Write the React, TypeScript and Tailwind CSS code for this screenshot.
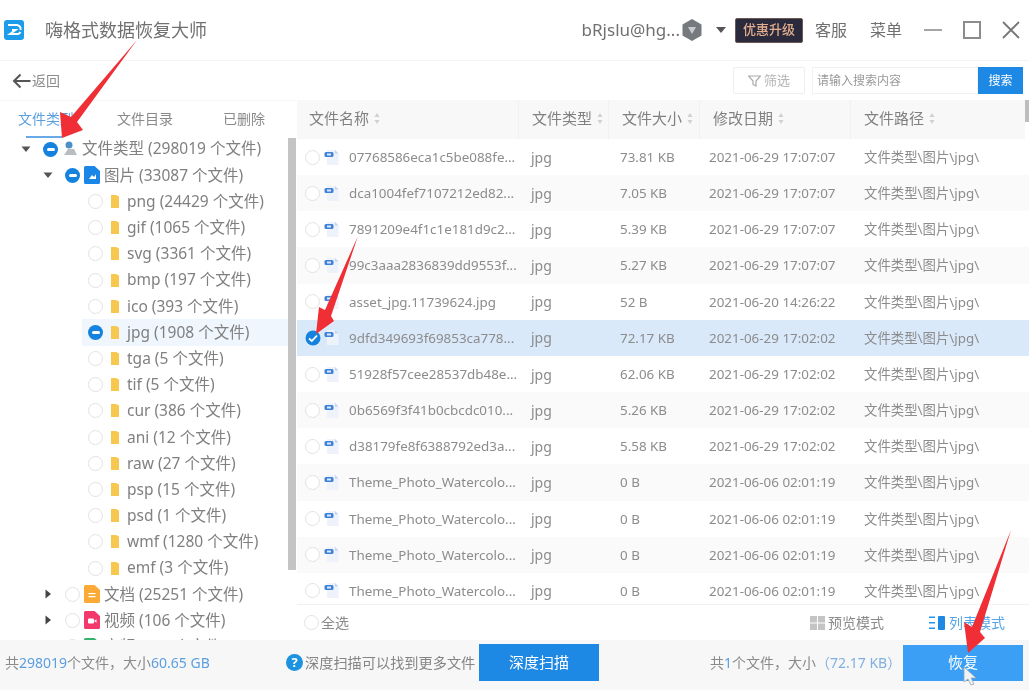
import type { ReactNode } from "react"

const FONT = "font-['Noto_Sans','Noto_Sans_CJK_SC',sans-serif]"

const treeRows = [
  { label: "png (24429 个文件)" },
  { label: "gif (1065 个文件)" },
  { label: "svg (3361 个文件)" },
  { label: "bmp (197 个文件)" },
  { label: "ico (393 个文件)" },
  { label: "jpg (1908 个文件)", active: true },
  { label: "tga (5 个文件)" },
  { label: "tif (5 个文件)" },
  { label: "cur (386 个文件)" },
  { label: "ani (12 个文件)" },
  { label: "raw (27 个文件)" },
  { label: "psp (15 个文件)" },
  { label: "psd (1 个文件)" },
  { label: "wmf (1280 个文件)" },
  { label: "emf (3 个文件)" },
]

const fileRows = [
  { name: "07768586eca1c5be088fe...", size: "73.81 KB", date: "2021-06-29 17:07:07" },
  { name: "dca1004fef7107212ed82...", size: "7.05 KB", date: "2021-06-29 17:07:07" },
  { name: "7891209e4f1c1e181d9c2...", size: "5.39 KB", date: "2021-06-29 17:07:07" },
  { name: "99c3aaa2836839dd9553f...", size: "5.27 KB", date: "2021-06-29 17:07:07" },
  { name: "asset_jpg.11739624.jpg", size: "52 B", date: "2021-06-20 14:26:22" },
  { name: "9dfd349693f69853ca778...", size: "72.17 KB", date: "2021-06-29 17:02:02", selected: true },
  { name: "51928f57cee28537db48e...", size: "62.06 KB", date: "2021-06-29 17:02:02" },
  { name: "0b6569f3f41b0cbcdc010...", size: "5.26 KB", date: "2021-06-29 17:02:02" },
  { name: "d38179fe8f6388792ed3a...", size: "5.58 KB", date: "2021-06-29 17:02:02" },
  { name: "Theme_Photo_Watercolo...", size: "0 B", date: "2021-06-06 02:01:19" },
  { name: "Theme_Photo_Watercolo...", size: "0 B", date: "2021-06-06 02:01:19" },
  { name: "Theme_Photo_Watercolo...", size: "0 B", date: "2021-06-06 02:01:19" },
  { name: "Theme_Photo_Watercolo...", size: "0 B", date: "2021-06-06 02:01:19" },
]

function Radio() {
  return <span className="block h-[15px] w-[15px] shrink-0 rounded-full border border-[#e2e2e2] bg-white" />
}

function Minus() {
  return (
    <span className="flex h-[15px] w-[15px] shrink-0 items-center justify-center rounded-full bg-[#1583dd]">
      <span className="block h-[3px] w-[8px] rounded-sm bg-white" />
    </span>
  )
}

function Caret({ open }: { open?: boolean }) {
  return (
    <svg width="10" height="10" viewBox="0 0 10 10" className="shrink-0">
      {open ? <path d="M0.500 2.500h9L5 8z" fill="#555" /> : <path d="M2.500 0.500v9L8 5z" fill="#444" />}
    </svg>
  )
}

function Folder() {
  return (
    <svg width="10" height="15" viewBox="0 0 10 15" className="shrink-0">
      <path d="M1 1h5l3 1.500V14H1z" fill="#f7c850" />
    </svg>
  )
}

function TypeIcon({ color, children }: { color: string; children?: ReactNode }) {
  return (
    <svg width="16" height="18" viewBox="0 0 16 18" className="shrink-0">
      <path d="M1.500 0h9L16 5v11.500a1.500 1.500 0 0 1-1.500 1.500h-13A1.500 1.500 0 0 1 0 16.500v-15A1.500 1.500 0 0 1 1.500 0z" fill={color} />
      {children}
    </svg>
  )
}

function FileIcon() {
  return (
    <svg width="16" height="17" viewBox="0 0 16 17" className="shrink-0">
      <path d="M3 1h8l3.500 3.500V16H3z" fill="#eef2fb" />
      <path d="M11 1l3.500 3.500H11z" fill="#c5d4ee" />
      <rect x="0.500" y="3" width="9" height="5" rx="1.500" fill="#3f83d8" />
      <rect x="3" y="4.500" width="4" height="2" fill="#dbe8f8" />
    </svg>
  )
}

function Sort() {
  return (
    <svg width="6" height="13" viewBox="0 0 6 13" className="shrink-0">
      <path d="M3 1l2.500 4h-5z" fill="#d0d0d0" />
      <path d="M3 12L0.500 8h5z" fill="#d0d0d0" />
    </svg>
  )
}

function TreeRow({ indent, caret, check, icon, label, active }: { indent: string; caret?: boolean | "closed"; check: ReactNode; icon: ReactNode; label: string; active?: boolean }) {
  return (
    <div className={`flex h-[26.2px] items-center ${indent}`}>
      {caret !== undefined && (
        <span className="mr-[12px] flex w-[10px] justify-center">
          <Caret open={caret === true} />
        </span>
      )}
      <div className={`flex h-full grow items-center ${active ? "-ml-[6px] bg-[#f0f6fd] pl-[6px]" : ""}`}>
        {check}
        {icon}
        <span className="whitespace-nowrap text-[15.5px] text-[#808080]">{label}</span>
      </div>
    </div>
  )
}

function Tree() {
  return (
    <div className="flex min-h-0 flex-1">
      <div className="-mt-[2px] w-[288px] overflow-hidden">
        <TreeRow indent="pl-[21px]" caret check={<Minus />} icon={
          <svg width="17" height="16" viewBox="0 0 17 16" className="ml-[3px] mr-[4px] shrink-0">
            <circle cx="8" cy="4" r="3.500" fill="#4a90c8" />
            <path d="M3 14l4-6h6l3 6z" fill="#b9bdc1" />
          </svg>
        } label="文件类型 (298019 个文件)" />
        <TreeRow indent="pl-[43px]" caret check={<Minus />} icon={
          <span className="ml-[4px] mr-[4px]">
            <TypeIcon color="#1a86e8"><path d="M5 13l3-4 2 2 2-3v5z" fill="#fff" /></TypeIcon>
          </span>
        } label="图片 (33087 个文件)" />
        {treeRows.map((r) => (
          <TreeRow key={r.label} indent="pl-[88px]" check={r.active ? <Minus /> : <Radio />} icon={<span className="ml-[7px] mr-[7px] flex"><Folder /></span>} label={r.label} active={r.active} />
        ))}
        <TreeRow indent="pl-[43px]" caret="closed" check={<Radio />} icon={
          <span className="ml-[4px] mr-[4px]">
            <TypeIcon color="#fbab35"><path d="M4.500 8h7v1.200h-7zM4.500 11h7v1.200h-7z" fill="#fff" /></TypeIcon>
          </span>
        } label="文档 (25251 个文件)" />
        <TreeRow indent="pl-[43px]" caret="closed" check={<Radio />} icon={
          <span className="ml-[4px] mr-[4px]">
            <TypeIcon color="#f3386b"><rect x="4" y="7.500" width="6" height="5" rx="1" fill="#fff" /><path d="M10 10l2.500-1.800v3.600z" fill="#fff" /></TypeIcon>
          </span>
        } label="视频 (106 个文件)" />
        <TreeRow indent="pl-[43px]" caret="closed" check={<Radio />} icon={
          <span className="ml-[4px] mr-[4px]">
            <TypeIcon color="#35b36e" />
          </span>
        } label="音频 (106 个文件)" />
      </div>
      <div className="h-[432px] w-[8px] bg-[#c4c4c4]" />
    </div>
  )
}

const cols = "grid grid-cols-[221px_90px_91px_151px_1fr]"

function HeadCell({ label, pad, border }: { label: string; pad: string; border?: boolean }) {
  return (
    <div className={`flex items-center gap-[5px] pb-[2px] ${pad} ${border ? "border-l border-[#f1f1f1]" : ""}`}>
      <span className="whitespace-nowrap text-[15px] text-[#808080]">{label}</span>
      <Sort />
    </div>
  )
}

function FileTable() {
  return (
    <div className="flex min-w-0 flex-1 flex-col">
      <div className="flex h-[39px] shrink-0">
        <div className={`${cols} h-full w-[728px] bg-[#f8f8f8]`}>
          <HeadCell label="文件名称" pad="pl-[12px]" />
          <HeadCell label="文件类型" pad="pl-[13px]" border />
          <HeadCell label="文件大小" pad="pl-[13px]" border />
          <HeadCell label="修改日期" pad="pl-[13px]" border />
          <HeadCell label="文件路径" pad="pl-[13px]" border />
        </div>
        <div className="h-[22px] w-[4px] bg-[#bdbdbd]" />
      </div>
      <div className="min-h-0 flex-1 overflow-hidden">
        {fileRows.map((f, i) => (
          <div key={i} className={`${cols} h-[36.17px] w-[732px] items-center text-[13.4px] text-[#8c8c8c] ${f.selected ? "bg-[#d9e9fa]" : i % 2 === 1 ? "bg-[#fafafa]" : "bg-white"}`}>
            <div className="flex items-center pl-[8px]">
              {f.selected ? (
                <svg width="16" height="16" viewBox="0 0 16 16" className="shrink-0">
                  <circle cx="8" cy="8" r="7.500" fill="#1583dd" />
                  <path d="M4 8.500l2.800 2.500L12 5.500" stroke="#fff" strokeWidth="1.800" fill="none" />
                </svg>
              ) : (
                <Radio />
              )}
              <span className={`${f.selected ? "ml-[3px]" : "ml-[4px]"} mr-[9px] flex`}><FileIcon /></span>
              <span className="whitespace-nowrap">{f.name}</span>
            </div>
            <span className="pl-[13px] text-[14px]">jpg</span>
            <span className="pl-[12px]">{f.size}</span>
            <span className="whitespace-nowrap pl-[10px]">{f.date}</span>
            <span className="whitespace-nowrap pl-[14px]">文件类型\图片\jpg\</span>
          </div>
        ))}
      </div>
      <div className="flex h-[36px] shrink-0 items-center border-t border-[#f1f1f1] pl-[7px] text-[14px]">
        <Radio />
        <span className="ml-[2px] text-[#8a8a8a]">全选</span>
        <svg width="15" height="14" viewBox="0 0 15 14" className="ml-[461px] shrink-0">
          <path d="M0 0h7v6.500H0zM8 0h7v6.500H8zM0 7.500h7V14H0zM8 7.500h7V14H8z" fill="#c4c4c4" />
        </svg>
        <span className="ml-[3px] text-[#8a8a8a]">预览模式</span>
        <svg width="17" height="14" viewBox="0 0 17 14" className="ml-[45px] shrink-0">
          <path d="M0 0.500h6v1.500H0zM0 6h6v1.500H0zM0 11.500h6V13H0z" fill="#2196f3" />
          <rect x="9" y="0" width="7" height="14" rx="1" fill="#1e88e5" />
        </svg>
        <span className="ml-[3px] text-[#56a6ea]">列表模式</span>
      </div>
    </div>
  )
}

export default function App() {
  return (
    <div className={`relative flex h-[690px] w-[1029px] flex-col overflow-hidden bg-white blur-[0.6px] ${FONT}`}>
      <header className="flex h-[60px] shrink-0 items-center pl-[4px] pr-[9px]">
        <svg width="20" height="20" viewBox="0 0 20 20" className="shrink-0">
          <rect width="20" height="20" rx="3" fill="#1c9cea" />
          <path d="M4 5h9a4 4 0 0 1 3.500 5M8 10h3.500L6 14h8a4 4 0 0 0 2.500-2" stroke="#fff" strokeWidth="2" fill="none" />
        </svg>
        <span className="ml-[21px] text-[18px] text-[#707070]">嗨格式数据恢复大师</span>
        <span className="ml-auto text-[17px] text-[#707070]">bRjslu@hg...</span>
        <svg width="22" height="24" viewBox="0 0 22 24" className="ml-[1px] shrink-0">
          <path d="M11 1l9.500 5.500v11L11 23l-9.500-5.500v-11z" fill="#76797d" />
          <path d="M7 9h8l-4 7z" fill="#c9ccce" />
        </svg>
        <svg width="10" height="6" viewBox="0 0 10 6" className="ml-[13px] shrink-0">
          <path d="M0 0h10L5 6z" fill="#555" />
        </svg>
        <div className="ml-[9px] flex h-[25px] w-[68px] items-center justify-center rounded-[2px] border border-[#6b5a52] bg-[#2b2a3c] text-[13px] font-medium text-[#e3ae8e]">优惠升级</div>
        <span className="ml-[12px] text-[16px] text-[#707070]">客服</span>
        <span className="ml-[23px] text-[16px] text-[#707070]">菜单</span>
        <span className="ml-[22px] block h-[2px] w-[18px] bg-[#a5a5a5]" />
        <span className="ml-[21px] block h-[18px] w-[18px] border-2 border-[#8c8c8c]" />
        <svg width="18" height="18" viewBox="0 0 18 18" className="ml-[21px] shrink-0">
          <path d="M1 1l16 16M17 1L1 17" stroke="#777" strokeWidth="1.800" />
        </svg>
      </header>

      <div className="flex h-[40px] shrink-0 items-center border-t border-[#f4f4f4] pl-[12px] pr-[6px]">
        <svg width="19" height="16" viewBox="0 0 19 16" className="shrink-0">
          <path d="M18.500 8H2M8.500 1.500L2 8l6.500 6.500" stroke="#555" strokeWidth="2" fill="none" />
        </svg>
        <span className="ml-[1px] pb-[1px] text-[14px] text-[#8c8c8c]">返回</span>
        <div className="ml-auto flex h-[27px] w-[72px] items-center justify-center gap-[3px] rounded-[2px] border border-[#eeeeee] text-[13px] text-[#b5b5b5]">
          <svg width="13" height="12" viewBox="0 0 13 12" className="shrink-0">
            <path d="M0.500 1h12L8 6v5L5 9.500V6z" fill="none" stroke="#aaa" strokeWidth="1.200" />
          </svg>
          筛选
        </div>
        <div className="ml-[7px] flex h-[27px] w-[166px] items-center border border-[#f2f2f2] pl-[4px] text-[12px] text-[#9a9a9a]">请输入搜索内容</div>
        <div className="flex h-[27px] w-[45px] items-center justify-center bg-[#1e88e5] text-[12px] text-white">搜索</div>
      </div>

      <main className="flex min-h-0 flex-1">
        <aside className="flex w-[296px] shrink-0 flex-col">
          <div className="relative flex h-[38px] shrink-0 items-center border-t border-[#f7f7f7] pb-[2px] pl-[18px] text-[14px] text-[#8a8a8a]">
            <span className="text-[#5b9fe0]">文件类型</span>
            <span className="ml-[43px]">文件目录</span>
            <span className="ml-[50px]">已删除</span>
            <span className="absolute bottom-0 left-[26px] h-[2px] w-[36px] bg-[#6aa9e6]" />
          </div>
          <Tree />
        </aside>
        <div className="w-px shrink-0" />
        <FileTable />
      </main>

      <footer className="flex h-[50px] shrink-0 items-center bg-[#f7f7f7] pb-[5px] pl-[5px] text-[14px] text-[#8a8a8a]">
        <span className="w-[281px] whitespace-nowrap">
          共<span className="text-[#5b9fe0]">298019</span>个文件，大小<span className="text-[#5b9fe0]">60.65 GB</span>
        </span>
        <span className="flex h-[17px] w-[17px] shrink-0 items-center justify-center rounded-full bg-[#1b93e0] text-[13px] font-bold text-white">?</span>
        <span className="ml-[2px] w-[174px] whitespace-nowrap text-[14.2px] text-[#858585]">深度扫描可以找到更多文件</span>
        <button className="flex h-[37px] w-[120px] items-center justify-center bg-[#1e88e5] text-[15px] text-white">深度扫描</button>
        <span className="ml-[111px] w-[193px] whitespace-nowrap">
          共<span className="text-[#5b9fe0]">1</span>个文件，大小<span className="text-[#7fb0e0]">（72.17 KB）</span>
        </span>
        <button className="flex h-[36px] w-[120px] items-center justify-center bg-[#3ba0f5] text-[15px] text-white">恢复</button>
      </footer>

      <svg width="1029" height="690" viewBox="0 0 1029 690" className="pointer-events-none absolute left-0 top-0">
        <path d="M137 40L77 122l6 8-21 8-2-26 11 5z" fill="#ef2f35" />
        <path d="M358 236L331 316l3 5-18 13 3-27 6 3z" fill="#ef2f35" />
        <path d="M1011 530L980 632l5 6-17 15-4-31 8 5z" fill="#ef2f35" />
        <path d="M964 667v15l4-3 3 6 3-1-3-6h5z" fill="#eef3f7" stroke="#9aa4ad" strokeWidth="0.800" />
      </svg>
    </div>
  )
}
